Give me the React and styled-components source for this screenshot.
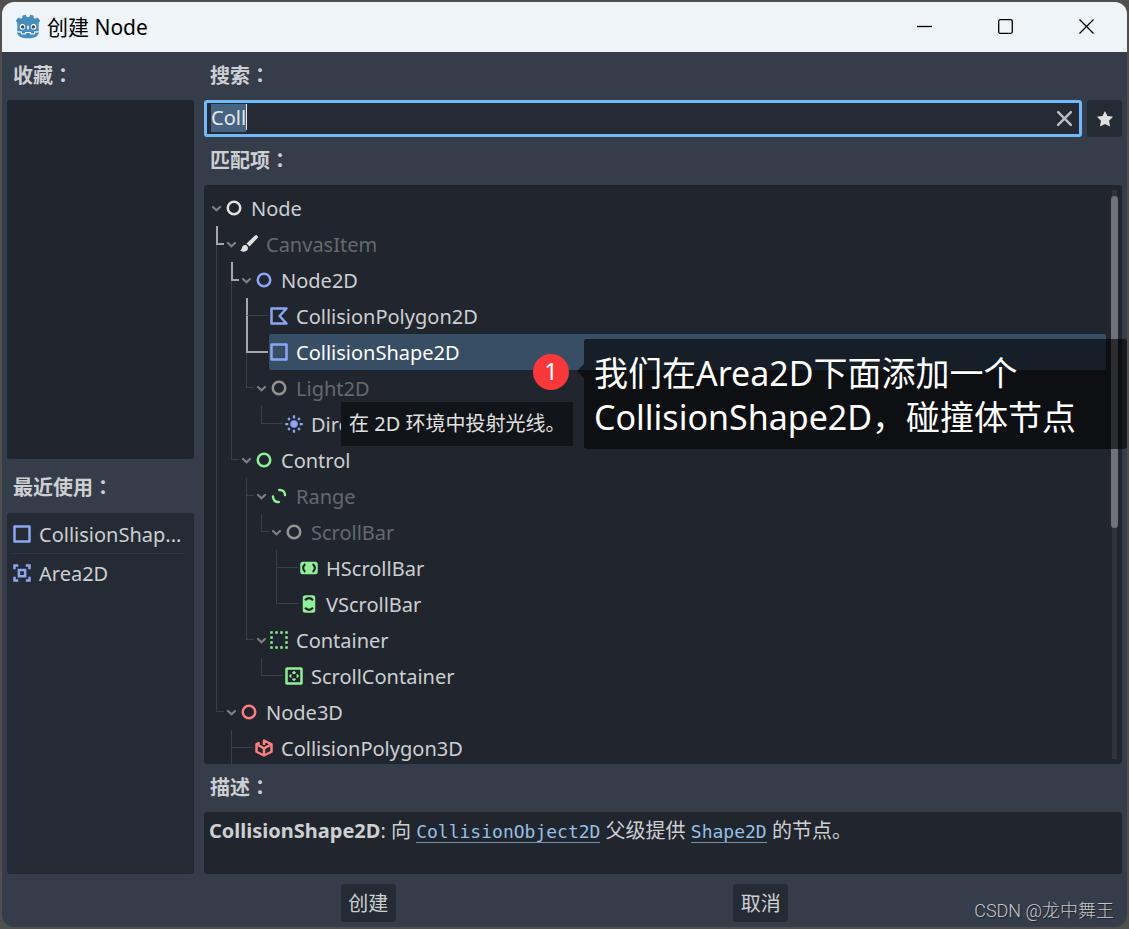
import { useEffect, useRef } from "react";
import styled, { createGlobalStyle, css } from "styled-components";

const BLUE = "#8da5f3";
const GREEN = "#8eef97";
const RED = "#fc7f7f";
const WHITE = "#e0e0e0";
const GRAY = "#97938f";

const icons = {
  node: <circle cx="8" cy="8" r="5" fill="none" stroke="currentColor" strokeWidth="2" />,
  brush: (
    <g fill="currentColor">
      <path d="M14.7 1.3a1.500 1.500 0 0 0-2.100 0L6 7.500l2.400 2.400 6.300-6.500a1.500 1.500 0 0 0 0-2.100z" />
      <path d="M5.3 8.800c-1.700-.2-2.700.9-2.900 2.200-.1 1-.5 1.600-1.500 2 1.300 1.700 5.500 1.600 6.200-1.100.3-1.300-.4-2.800-1.800-3.100z" />
    </g>
  ),
  polygon2d: (
    <path
      d="M14 2H2v12h12L8.500 8z"
      fill="none"
      stroke="currentColor"
      strokeWidth="2"
      strokeLinejoin="round"
    />
  ),
  shape2d: (
    <path d="M2 2h12v12H2z" fill="none" stroke="currentColor" strokeWidth="2" strokeLinejoin="round" />
  ),
  area2d: (
    <g fill="none" stroke="currentColor" strokeWidth="2">
      <path d="M2 5V2h3M11 2h3v3M14 11v3h-3M5 14H2v-3" />
      <path d="M5.500 5.500h5v5h-5z" />
    </g>
  ),
  sun: (
    <g stroke="currentColor" strokeWidth="1.800">
      <circle cx="8" cy="8" r="3" fill="currentColor" stroke="none" />
      <path d="M8 1v2.500M8 12.500V15M1 8h2.500M12.500 8H15M3.300 3.300l1.400 1.400M11.300 11.300l1.400 1.400M3.300 12.700l1.400-1.400M11.300 4.700l1.400-1.400" />
    </g>
  ),
  range: (
    <g fill="none" stroke="currentColor" strokeWidth="2" strokeLinecap="round">
      <path d="M8.200 3.200C11 3 12.700 4.600 12.800 7.200" />
      <path d="M7.800 12.800C5 13 3.300 11.400 3.200 8.400" />
    </g>
  ),
  hscroll: (
    <>
      <rect x="1" y="3" width="14" height="10" rx="2" fill="currentColor" />
      <path d="M5 4.800Q1.600 8 5 11.200M11 4.800Q14.400 8 11 11.200" fill="none" stroke="#21262e" strokeWidth="1.700" />
    </>
  ),
  vscroll: (
    <>
      <rect x="3" y="1" width="10" height="14" rx="2" fill="currentColor" />
      <path d="M4.800 5Q8 1.600 11.200 5M4.800 11Q8 14.400 11.200 11" fill="none" stroke="#21262e" strokeWidth="1.700" />
    </>
  ),
  container: (
    <g fill="none" stroke="currentColor" strokeWidth="2">
      <path d="M1 2h2M5 2h2M9 2h2M13 2h2M1 14h2M5 14h2M9 14h2M13 14h2" />
      <path d="M2 5v2M2 9v2M14 5v2M14 9v2" />
    </g>
  ),
  scrollContainer: (
    <g fill="none" stroke="currentColor">
      <rect x="2" y="2" width="12" height="12" rx="0.500" strokeWidth="2" />
      <path d="M6.800 5.900 8 4.700l1.200 1.200M6.800 10.100 8 11.300l1.200-1.200M5.900 6.800 4.700 8l1.200 1.200M10.100 6.800 11.300 8l-1.200 1.200" strokeWidth="1.200" />
    </g>
  ),
  polygon3d: (
    <g fill="none" stroke="currentColor" strokeWidth="2" strokeLinejoin="round">
      <path d="M8 5.500V2l6 3v6l-6 3-6-3V5l2.500-1.200" />
      <path d="M2 5l6 3.300L14 5M8 8.300V14" />
    </g>
  ),
};

// guides, one letter per level:
// "." empty, "|" passes by, "T" branch, "L" last branch,
// "H" selected path turning here, "P" selected path passing by a branch
const rows = [
  { guides: "", icon: "node", color: WHITE, name: "Node", open: true },
  { guides: "H", icon: "brush", color: WHITE, name: "CanvasItem", open: true, dim: true },
  { guides: "|H", icon: "node", color: BLUE, name: "Node2D", open: true },
  { guides: "||P", icon: "polygon2d", color: BLUE, name: "CollisionPolygon2D" },
  { guides: "||H", icon: "shape2d", color: BLUE, name: "CollisionShape2D", selected: true },
  { guides: "||L", icon: "node", color: GRAY, name: "Light2D", open: true, dim: true },
  { guides: "||.L", icon: "sun", color: BLUE, name: "DirectionalLight2D" },
  { guides: "|L", icon: "node", color: GREEN, name: "Control", open: true },
  { guides: "|.T", icon: "range", color: GREEN, name: "Range", open: true, dim: true },
  { guides: "|.|L", icon: "node", color: GRAY, name: "ScrollBar", open: true, dim: true },
  { guides: "|.|.T", icon: "hscroll", color: GREEN, name: "HScrollBar" },
  { guides: "|.|.L", icon: "vscroll", color: GREEN, name: "VScrollBar" },
  { guides: "|.L", icon: "container", color: GREEN, name: "Container", open: true },
  { guides: "|..L", icon: "scrollContainer", color: GREEN, name: "ScrollContainer" },
  { guides: "L", icon: "node", color: RED, name: "Node3D", open: true },
  { guides: ".T", icon: "polygon3d", color: RED, name: "CollisionPolygon3D" },
];

const Icon = ({ name, color }) => (
  <IconSvg viewBox="0 0 16 16" $color={color} aria-hidden="true">
    {icons[name]}
  </IconSvg>
);

const GodotLogo = () => (
  <LogoSvg viewBox="0 0 26 26" aria-hidden="true">
    <path
      fill="#478cbf"
      d="M7.500 1.500 10.800.8l.9 2.200h2.600l.9-2.200 3.300.7.100 2.500 1.500.8 2.300-1.200 2.800 2.900-1.500 2.500v9.500c0 4-4.700 5.800-10.700 5.800S2.300 22.500 2.300 18.500V9L.8 6.500l2.800-2.900 2.300 1.200 1.500-.8z"
    />
    <circle cx="7.400" cy="12.800" r="2.800" fill="#fff" />
    <circle cx="18.600" cy="12.800" r="2.800" fill="#fff" />
    <circle cx="7.700" cy="12.900" r="1.700" fill="#414042" />
    <circle cx="18.300" cy="12.900" r="1.700" fill="#414042" />
    <path d="M13 12.200v2.600" stroke="#fff" strokeWidth="1.500" strokeLinecap="round" />
    <path
      d="M2.300 17.800l4 .3.400 1.900h3.500l.4-1.500h4.800l.4 1.500h3.500l.4-1.900 4-.3"
      fill="none"
      stroke="#fff"
      strokeWidth="1.100"
    />
  </LogoSvg>
);

const Heading = ({ children, tall, htmlFor }) => (
  <HeadingBar $tall={tall} as={htmlFor ? "label" : "h2"} htmlFor={htmlFor}>
    {children}
    <span>：</span>
  </HeadingBar>
);

const TreeRow = ({ row }) => {
  const last = row.guides.length - 1;
  return (
    <Row role="treeitem" aria-selected={!!row.selected}>
      {[...row.guides].map((kind, i) => (
        <Guide key={i} $kind={kind} $wide={i === last && !row.open} />
      ))}
      {row.open && (
        <Arrow viewBox="0 0 11 11" aria-hidden="true">
          <path d="M2 4 5.500 7.200 9 4" fill="none" stroke="currentColor" strokeWidth="2.200" strokeLinecap="round" />
        </Arrow>
      )}
      <Item $selected={row.selected} $dim={row.dim}>
        <Icon name={row.icon} color={row.color} />
        <Label>{row.name}</Label>
      </Item>
    </Row>
  );
};

const App = () => {
  const search = useRef(null);

  useEffect(() => {
    search.current.focus();
    search.current.select();
  }, []);

  return (
    <>
      <GlobalStyle />
      <Window>
        <TitleBar>
          <GodotLogo />
          <Title>创建 Node</Title>
          <WindowButton aria-label="最小化">
            <svg viewBox="0 0 16 16">
              <path d="M0 7.500h15" />
            </svg>
          </WindowButton>
          <WindowButton aria-label="最大化">
            <svg viewBox="0 0 16 16">
              <rect x="0.700" y="0.700" width="13.600" height="13.600" rx="1.500" />
            </svg>
          </WindowButton>
          <WindowButton aria-label="关闭">
            <svg viewBox="0 0 16 16">
              <path d="M.5.5l14 14M14.500.5l-14 14" />
            </svg>
          </WindowButton>
        </TitleBar>

        <Body>
          <Sidebar>
            <Heading>收藏</Heading>
            <Favorites />
            <Heading tall>最近使用</Heading>
            <Recent>
              <li>
                <Icon name="shape2d" color={BLUE} />
                <Label>CollisionShap...</Label>
              </li>
              <li>
                <Icon name="area2d" color={BLUE} />
                <Label>Area2D</Label>
              </li>
            </Recent>
          </Sidebar>

          <Main>
            <Heading htmlFor="search">搜索</Heading>
            <SearchRow>
              <SearchBox>
                <SearchInput id="search" ref={search} defaultValue="Coll" spellCheck="false" />
                <Caret />
                <ClearButton aria-label="清除">
                  <svg viewBox="0 0 16 16">
                    <path d="M2 2l12 12M14 2 2 14" fill="none" stroke="currentColor" strokeWidth="2.400" strokeLinecap="round" />
                  </svg>
                </ClearButton>
              </SearchBox>
              <StarButton aria-label="收藏">
                <svg viewBox="0 0 16 16">
                  <path
                    fill="currentColor"
                    d="M8 .8l2.200 4.600 5 .6-3.600 3.500.9 5.200L8 12.500l-4.500 2.200.9-5.200L.8 6l5-.6z"
                  />
                </svg>
              </StarButton>
            </SearchRow>

            <Heading>匹配项</Heading>
            <TreePanel>
              <Tree role="tree">
                {rows.map((row) => (
                  <TreeRow key={row.name} row={row} />
                ))}
              </Tree>
              <ScrollTrack>
                <ScrollThumb />
              </ScrollTrack>
            </TreePanel>

            <Heading>描述</Heading>
            <Description>
              <b>CollisionShape2D</b>: 向 <a href="#CollisionObject2D">CollisionObject2D</a> 父级提供{" "}
              <a href="#Shape2D">Shape2D</a> 的节点。
            </Description>
          </Main>
        </Body>

        <Footer>
          <Button>创建</Button>
          <Button>取消</Button>
        </Footer>

        <Tooltip role="tooltip">在 2D 环境中投射光线。</Tooltip>
        <Badge>1</Badge>
        <Callout>
          我们在Area2D下面添加一个
          <br />
          CollisionShape2D，碰撞体节点
        </Callout>
        <Watermark>CSDN @龙中舞王</Watermark>
      </Window>
    </>
  );
};

export default App;

const GlobalStyle = createGlobalStyle`
  * {
    box-sizing: border-box;
  }

  body {
    margin: 0;
    background: #504f4e;
    color: #cdcfd2;
    font-family: "Noto Sans", "Noto Sans CJK SC", sans-serif;
    font-size: 20px;
    line-height: 28px;
  }

  button,
  input {
    font: inherit;
    color: inherit;
    border: none;
    padding: 0;
    background: none;
  }

  ul {
    list-style: none;
    margin: 0;
    padding: 0;
  }
`;

const Window = styled.div`
  position: relative;
  display: flex;
  flex-direction: column;
  height: calc(100vh - 4px);
  margin: 2px;
  background: #363d4a;
  border-radius: 12px;
`;

const TitleBar = styled.header`
  display: flex;
  align-items: center;
  flex: none;
  height: 50px;
  padding-left: 13px;
  background: #eff4f9;
  color: #000;
  border-radius: 12px 12px 0 0;
`;

const LogoSvg = styled.svg`
  width: 26px;
  height: 26px;
  margin-right: 6px;
`;

const Title = styled.h1`
  flex: 1;
  margin: 0;
  font-size: 21px;
  font-weight: 400;
`;

const WindowButton = styled.button`
  display: flex;
  align-items: center;
  justify-content: center;
  width: 81px;
  height: 50px;

  svg {
    width: 16px;
    height: 16px;
    fill: none;
    stroke: #000;
    stroke-width: 1.3;
  }
`;

const Body = styled.div`
  display: flex;
  flex: 1;
  gap: 10px;
  min-height: 0;
  padding: 0 5px;
`;

const Sidebar = styled.aside`
  display: flex;
  flex-direction: column;
  flex: none;
  width: 187px;
`;

const Main = styled.main`
  display: flex;
  flex-direction: column;
  flex: 1;
  min-width: 0;
`;

const HeadingBar = styled.h2`
  flex: none;
  height: ${(props) => (props.$tall ? 54 : 48)}px;
  margin: 0;
  padding-left: 6px;
  font-size: 20px;
  font-weight: 700;
  line-height: ${(props) => (props.$tall ? 56 : 46)}px;

  span {
    font-family: "Noto Sans CJK TC", sans-serif;
  }
`;

const Favorites = styled.ul`
  flex: 1;
  background: #21262e;
  border-radius: 3px;
`;

const Recent = styled.ul`
  flex: 1;
  padding: 2px 10px 0 5px;
  background: #252b34;
  border-radius: 3px;

  li {
    display: flex;
    align-items: center;
    gap: 7px;
    height: 38px;
    white-space: nowrap;
  }

  li + li {
    border-top: 1px solid #2f353e;
  }
`;

const IconSvg = styled.svg`
  flex: none;
  width: 20px;
  height: 20px;
  color: ${(props) => props.$color};
`;

const Label = styled.span`
  padding-top: 2px;
`;

const SearchRow = styled.div`
  display: flex;
  flex: none;
  gap: 5px;
  height: 37px;
`;

const SearchBox = styled.div`
  position: relative;
  display: flex;
  align-items: center;
  flex: 1;
  padding: 0 6px 0 4px;
  background: #252b34;
  border: 3px solid #70bafa;
  border-radius: 3px;
`;

const SearchInput = styled.input`
  flex: 1;
  min-width: 0;
  padding-bottom: 2px;
  outline: none;
  color: #e6e8ea;

  &::selection {
    background: #466482;
    color: #e6e8ea;
  }
`;

const Caret = styled.span`
  position: absolute;
  left: 39px;
  top: 1px;
  width: 1px;
  height: 26px;
  background: #e6e8ea;
`;

const ClearButton = styled.button`
  display: flex;
  color: #b9bcc0;

  svg {
    width: 17px;
    height: 17px;
  }
`;

const StarButton = styled.button`
  display: flex;
  align-items: center;
  justify-content: center;
  width: 35px;
  background: #252b34;
  border-radius: 3px;
  color: #e0e0e0;

  svg {
    width: 18px;
    height: 18px;
  }
`;

const TreePanel = styled.div`
  display: flex;
  flex: 1;
  min-height: 0;
  overflow: hidden;
  padding: 5px 4px 5px 7px;
  background: #21262e;
  border-radius: 3px;
`;

const Tree = styled.ul`
  flex: 1;
  margin-right: 5px;
`;

const Row = styled.li`
  display: flex;
  align-items: center;
  height: 36px;
`;

const thin = "1px solid #3b4048";
const bright = "2px solid #a5a7aa";

const guideLines = {
  ".": "",
  "|": css`
    &::before,
    &::after {
      border-left: ${thin};
    }
  `,
  T: css`
    &::before {
      border-left: ${thin};
      border-bottom: ${thin};
    }
    &::after {
      border-left: ${thin};
    }
  `,
  L: css`
    &::before {
      border-left: ${thin};
      border-bottom: ${thin};
    }
  `,
  H: css`
    grid-template-rows: 19px 17px;

    &::before {
      border-left: ${bright};
      border-bottom: ${bright};
    }
    &::after {
      border-left: ${thin};
    }
  `,
  P: css`
    &::before {
      border-left: ${bright};
      border-bottom: ${thin};
    }
    &::after {
      border-left: ${bright};
    }
  `,
};

const Guide = styled.span`
  display: grid;
  grid-template-rows: 18px 18px;
  flex: none;
  width: ${(props) => (props.$wide ? 28 : 15)}px;
  padding: 0 ${(props) => (props.$wide ? 1 : 2)}px 0 5px;

  &::before,
  &::after {
    content: "";
  }

  ${(props) => guideLines[props.$kind]}
`;

const Arrow = styled.svg`
  flex: none;
  width: 11px;
  height: 11px;
  margin-right: 2px;
  color: #7c7f84;
`;

const Item = styled.div`
  display: flex;
  align-items: center;
  flex: 1;
  gap: 7px;
  height: 36px;
  border-radius: 2px;
  white-space: nowrap;
  color: ${(props) => (props.$dim ? "#65696f" : "#cdcfd2")};

  ${(props) =>
    props.$selected &&
    css`
      background: #384e65;
      color: #fff;
    `}
`;

const ScrollTrack = styled.div`
  display: flex;
  justify-content: center;
  width: 7px;
  padding-top: 6px;
  background: linear-gradient(#2f343c, #2f343c) center / 5px 100% no-repeat;
`;

const ScrollThumb = styled.div`
  width: 7px;
  height: 59%;
  background: #6f7278;
  border-radius: 4px;
`;

const Description = styled.p`
  flex: none;
  height: 62px;
  margin: 0;
  padding: 5px;
  background: #21262e;
  border-radius: 3px;

  a {
    color: #96bfe6;
    font-family: "DejaVu Sans Mono", monospace;
    font-size: 18px;
    text-decoration: none;
    border-bottom: 1px solid #7391ad;
  }
`;

const Footer = styled.footer`
  display: flex;
  flex: none;
  gap: 4px;
  justify-content: space-evenly;
  padding: 10px 5px 5px;
`;

const Button = styled.button`
  width: 55px;
  height: 38px;
  padding-top: 2px;
  background: #252b34;
  border-radius: 3px;
`;

const Tooltip = styled.div`
  position: absolute;
  left: 339px;
  top: 400px;
  padding: 8px;
  background: #111418;
  color: #e0e0e0;
  white-space: nowrap;
`;

const Badge = styled.div`
  position: absolute;
  left: 531px;
  top: 352px;
  width: 36px;
  height: 36px;
  border-radius: 50%;
  background: #fa3839;
  color: #fff;
  font-size: 24px;
  line-height: 34px;
  text-align: center;
`;

const Callout = styled.div`
  position: absolute;
  left: 582px;
  right: 0;
  top: 337px;
  padding: 12px 10px 10px;
  background: rgba(0, 0, 0, 0.6);
  border-radius: 3px;
  color: #fff;
  font-size: 34px;
  line-height: 44px;
  white-space: nowrap;

  &::before {
    content: "";
    position: absolute;
    right: 100%;
    top: 25px;
    border: 7px solid transparent;
    border-left: none;
    border-right-color: rgba(0, 0, 0, 0.6);
  }
`;

const Watermark = styled.div`
  position: absolute;
  right: 13px;
  bottom: 2px;
  color: #c4c6c9;
  font-family: Roboto, "Noto Sans CJK SC", sans-serif;
  font-size: 18px;
  font-weight: 300;
  text-shadow: 1px 1px 1px #1c2028;
`;
